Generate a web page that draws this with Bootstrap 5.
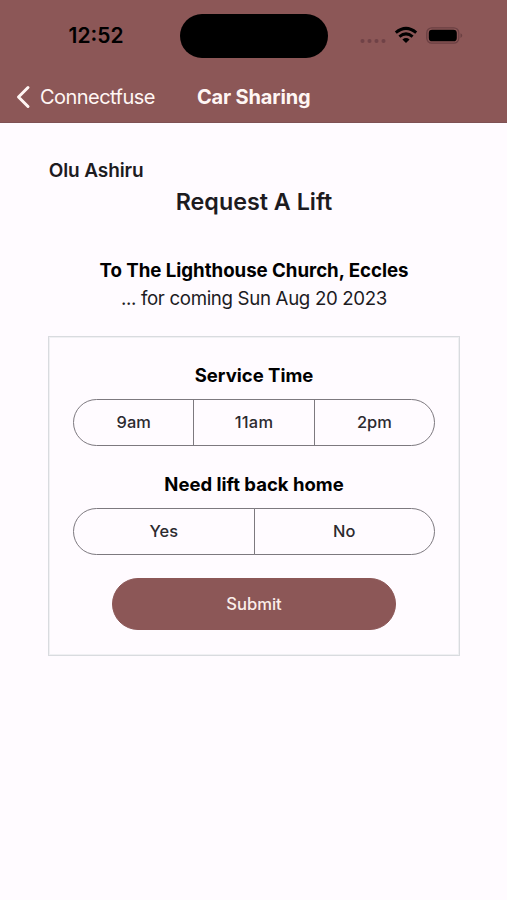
<!DOCTYPE html>
<html lang="en">
<head>
<meta charset="utf-8">
<meta name="viewport" content="width=device-width, initial-scale=1">
<title>Car Sharing</title>
<link href="https://cdn.jsdelivr.net/npm/bootstrap@5.3.0/dist/css/bootstrap.min.css" rel="stylesheet">
<style>
  body { font-family: Inter, "Liberation Sans", sans-serif; background: #fffbff; color: #000; min-height: 900px; line-height: 1.2; }
  .app-header { background: #8c5757; height: 123px; border-bottom: 1px solid #7f5154; }
  .status-bar { display: grid; grid-template-columns: 180px 148px 1fr; height: 72px; }
  .clock { font-size: 21px; font-weight: 600; padding-left: 12px; }
  .island { height: 44px; background: #000; }
  .signals { padding-left: 32px; }
  .title-bar { display: grid; grid-template-columns: 197px 1fr; height: 50px; color: #fff6f4; font-size: 20px; }
  .back-link { color: inherit; padding-left: 16px; gap: 9px; }
  .back-link span { letter-spacing: -.55px; }
  .screen-title { font-size: 20px; font-weight: 700; letter-spacing: -.17px; }
  .page-body { padding: 36px 47px 0 48px; }
  .rider { font-size: 19px; line-height: 24px; font-weight: 600; color: #1d1b1f; letter-spacing: -.1px; padding-left: .7px; }
  .heading { font-size: 23.3px; line-height: 30px; margin-top: 3.5px; font-weight: 600; color: #1d1b1f; }
  .venue { font-size: 18.7px; line-height: 28px; margin-top: 40.5px; font-weight: 700; letter-spacing: -.04px; }
  .day { font-size: 18.7px; line-height: 28px; color: #1d1b1f; letter-spacing: -.34px; }
  .request-form { border: 1.5px solid #d9dbdf; outline: 1px solid #f0f0f3; outline-offset: -2px; margin-top: 23px; height: 320px; padding: 24px 24px 0; }
  .field-name { font-size: 18.5px; line-height: 28px; font-weight: 700; }
  .segments { height: 47px; margin-top: 10px; }
  .segments .btn { --bs-btn-border-color: #7d797f; --bs-btn-color: #2c2a2f; --bs-btn-font-size: 16.4px; --bs-btn-font-weight: 500; flex: 1 1 0; display: flex; align-items: center; justify-content: center; }
  .segments .elevens { letter-spacing: .3px; }
  .second-field { margin-top: 23.5px; }
  .submit-btn { --bs-btn-bg: #8c5757; --bs-btn-border-color: #8c5757; --bs-btn-color: #fbeeea; --bs-btn-font-size: 16.6px; --bs-btn-font-weight: 500; width: 284px; height: 52px; margin-top: 23.5px; padding-top: 7px; }
</style>
<script src="https://cdn.jsdelivr.net/npm/bootstrap@5.3.0/dist/js/bootstrap.bundle.min.js"></script>
</head>
<body>
<header class="app-header">
  <div class="status-bar align-items-center">
    <div class="clock text-center">12:52</div>
    <div class="island rounded-pill"></div>
    <div class="signals d-flex align-items-center">
      <svg width="104" height="24" viewBox="0 0 104 24">
        <g fill="#704247"><circle cx="2.5" cy="17" r="2"/><circle cx="9.5" cy="17" r="2"/><circle cx="16.5" cy="17" r="2"/><circle cx="23.5" cy="17" r="2"/></g>
        <g fill="none" stroke="#000" stroke-width="3"><path d="M35.8 8.6Q46 .2 56.2 8.6"/><path d="M39.4 12.6Q46 7.2 52.6 12.6"/></g>
        <path d="M46 19L42.4 15.4Q46 12.6 49.6 15.4Z" fill="#000"/>
        <rect x="66.8" y="3.8" width="32" height="15.4" rx="5" fill="none" stroke="#6b4043" stroke-width="1.3"/>
        <rect x="68.8" y="5.7" width="28" height="11.6" rx="3.4" fill="#000"/>
        <path d="M100.5 9.3Q104 11.5 100.5 13.9Z" fill="#6b4043"/>
      </svg>
    </div>
  </div>
  <nav class="title-bar align-items-center">
    <a class="back-link d-flex align-items-center text-decoration-none" href="#">
      <svg width="15" height="24" viewBox="0 0 15 24" fill="none" stroke="#fff6f4" stroke-width="3" stroke-linecap="round" stroke-linejoin="round"><path d="M12 2.5L2.5 12L12 21.5"/></svg>
      <span>Connectfuse</span>
    </a>
    <div><span class="screen-title">Car Sharing</span></div>
  </nav>
</header>
<main class="page-body">
  <div><span class="rider">Olu Ashiru</span></div>
  <h1 class="heading text-center mb-0"><span>Request A Lift</span></h1>
  <div class="venue text-center"><span>To The Lighthouse Church, Eccles</span></div>
  <div class="day text-center"><span>... for coming Sun Aug 20 2023</span></div>
  <form class="request-form">
    <div class="field-name text-center"><span>Service Time</span></div>
    <div class="segments btn-group w-100" role="group" aria-label="Service Time">
      <button type="button" class="btn rounded-start-pill"><span>9am</span></button>
      <button type="button" class="btn"><span class="elevens">11am</span></button>
      <button type="button" class="btn rounded-end-pill"><span>2pm</span></button>
    </div>
    <div class="field-name second-field text-center"><span>Need lift back home</span></div>
    <div class="segments btn-group w-100" role="group" aria-label="Need lift back home">
      <button type="button" class="btn rounded-start-pill"><span>Yes</span></button>
      <button type="button" class="btn rounded-end-pill"><span>No</span></button>
    </div>
    <button type="button" class="submit-btn btn rounded-pill d-block mx-auto"><span>Submit</span></button>
  </form>
</main>
</body>
</html>
